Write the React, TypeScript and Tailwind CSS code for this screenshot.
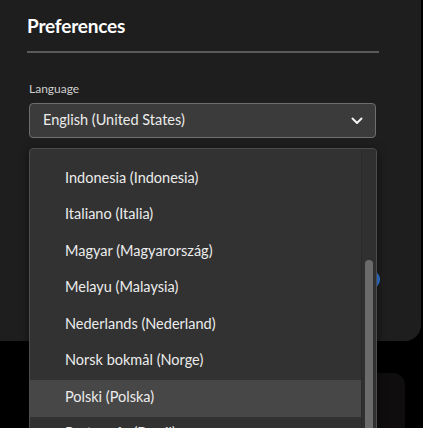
import React from "react";

const items = [
  "Indonesia (Indonesia)",
  "Italiano (Italia)",
  "Magyar (Magyarország)",
  "Melayu (Malaysia)",
  "Nederlands (Nederland)",
  "Norsk bokmål (Norge)",
  "Polski (Polska)",
  "Português (Brasil)",
];

export default function App() {
  return (
    <div
      className="relative w-[423px] h-[428px] bg-black overflow-hidden"
      style={{ fontFamily: "Lato, 'Noto Sans', sans-serif" }}
    >
      {/* back element bottom-right */}
      <div className="absolute left-[350px] top-[373px] w-[55px] h-[80px] rounded-tr-[12px] bg-[#0f0d0d]" />

      {/* dialog panel */}
      <div className="w-[421px] h-[341px] bg-[#1e1e1e] rounded-br-[16px] pl-[27px] pr-[42px] pt-[14px]">
        <h1 className="text-[19px] leading-[24px] font-bold text-white tracking-[-0.2px]">Preferences</h1>
        <div className="mt-[13px] h-[2px] bg-[#5a5a5a]" />
        <div className="mt-[28px] pl-[2px] text-[12px] leading-[16px] text-[#d0d0d0]">Language</div>
        <div className="mt-[6px] ml-[2px] mr-[3px] h-[35px] rounded-[4px] border border-[#6e6e6e] bg-[#3b3b3b] flex items-center justify-between pl-[13px] pr-[12px] pb-[2px]">
          <span className="text-[14.5px] text-[#ececec]">English (United States)</span>
          <svg width="12" height="8" viewBox="0 0 12 8" fill="none" className="mt-[2px]">
            <path d="M1.5 1.5 L6 6 L10.5 1.5" stroke="#f2f2f2" strokeWidth="2" strokeLinecap="round" strokeLinejoin="round" />
          </svg>
        </div>
      </div>

      {/* blue toggle behind dropdown */}
      <div className="absolute left-[340px] top-[270px] w-[40px] h-[19px] rounded-full bg-[#2f7de1]" />

      {/* dropdown menu */}
      <div className="absolute left-[29px] top-[148px] w-[348px] h-[300px] rounded-[4px] border border-[#4d4d4d] bg-[#323232] flex overflow-hidden shadow-[0_2px_8px_rgba(0,0,0,0.5)]">
        <div className="flex-1 pt-[12px]">
          {items.map((t) => (
            <div
              key={t}
              className={`h-[36.5px] flex items-center pl-[35px] pb-[3px] text-[14.5px] text-[#ececec] ${
                t === "Polski (Polska)" ? "bg-[#474747]" : ""
              }`}
            >
              {t}
            </div>
          ))}
        </div>
        <div className="w-[15px] border-l border-[#2a2a2a] bg-[#303030] pt-[111px] flex justify-center">
          <div className="w-[8px] h-[200px] rounded-full bg-[#6b6b6b]" />
        </div>
      </div>
    </div>
  );
}
